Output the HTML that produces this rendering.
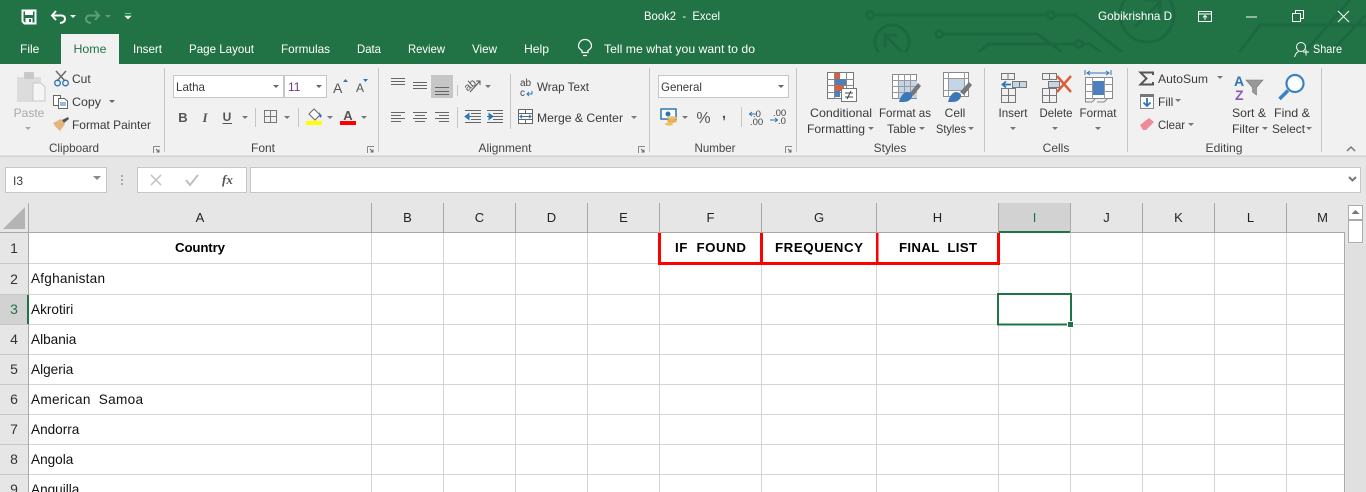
<!DOCTYPE html>
<html><head><meta charset="utf-8"><style>
html,body{margin:0;padding:0;width:1366px;height:492px;overflow:hidden;background:#fff}
svg{display:block}
text{font-family:"Liberation Sans",sans-serif;font-size:12px;fill:#3a3a3a;white-space:pre}
.t{fill:#fff}
.g{fill:#444;text-anchor:middle}
.c{text-anchor:middle;fill:#3a3a3a}
.h{font-size:13px;text-anchor:middle;fill:#222}
.r{font-size:14px;text-anchor:middle;fill:#333}
.d{font-size:13.6px;fill:#111}
.b{font-size:13.3px;font-weight:bold;text-anchor:middle;fill:#000}
.ln{stroke:#777;stroke-width:1;fill:none}
.gl{stroke:#d4d4d4;stroke-width:1}
.cir{stroke:#1c6840;stroke-width:3;fill:none}
</style></head><body>
<svg width="1366" height="492" viewBox="0 0 1366 492" xmlns="http://www.w3.org/2000/svg">
<defs><clipPath id="tb"><rect x="0" y="0" width="1366" height="52"/></clipPath></defs>
<!-- title bar -->
<rect width="1366" height="64" fill="#217346"/>
<g clip-path="url(#tb)" class="cir">
<circle cx="870" cy="15" r="3.5"/><path d="M874 15H1047M1055 15H1075L1122 52"/><circle cx="1051" cy="15" r="3.5"/>
<circle cx="892" cy="42" r="17"/><path d="M885 47V35H897M885 35L902 52"/>
<circle cx="939" cy="34" r="3.5"/><path d="M943 34H1037L1062 52M976 54L989 44H1075M1083 44H1090L1103 54"/><circle cx="1079" cy="44" r="3.5"/>
<circle cx="1147" cy="15" r="27"/><path d="M1135 27L1160 2M1145 0H1160V15"/>
<path d="M1238 54L1260 25H1366M1303 54L1350 0M1329 54L1366 15"/>
</g>
<!-- QAT -->
<path d="M22.500 10.500H35.500V23.500H24.500L22.500 21.500Z" fill="none" stroke="#fff" stroke-width="2"/><rect x="25" y="10" width="8" height="5" fill="#fff"/><rect x="25.500" y="18" width="7" height="5" fill="#fff"/><rect x="29" y="19" width="2" height="3" fill="#217346"/>
<path d="M52 15.500H61Q65 15.500 65 19T60 23M56 11L52 15.500L56 20" fill="none" stroke="#fff" stroke-width="2"/><path d="M70 15h6l-3 3z" fill="#fff"/>
<path d="M99 15.500H90Q86 15.500 86 19T91 23M95 11L99 15.500L95 20" fill="none" stroke="#5f9c7b" stroke-width="2"/><path d="M105 15h6l-3 3z" fill="#5f9c7b"/>
<path d="M125 13.500h6M125 16h6l-3 3z" fill="#fff" stroke="#fff" stroke-width=".6"/>
<text x="644" y="20" class="t" textLength="76" lengthAdjust="spacingAndGlyphs">Book2  -  Excel</text>
<text x="1098" y="20" class="t" textLength="74" lengthAdjust="spacingAndGlyphs">Gobikrishna D</text>
<rect x="1198.500" y="11.500" width="13" height="10" fill="none" stroke="#fff"/><path d="M1198 14H1212M1205 20V16M1203 17.500L1205 15.500L1207 17.500" stroke="#fff" fill="none"/>
<path d="M1246 17H1257" stroke="#fff"/>
<path d="M1292.500 13.500H1300.500V21.500H1292.500ZM1295.500 13V10.500H1303.500V18.500H1301" fill="none" stroke="#fff"/>
<path d="M1338 11L1349 22M1349 11L1338 22" stroke="#fff" fill="none"/>
<!-- tabs -->
<rect x="61" y="34" width="58" height="30" fill="#f1f1f1"/>
<text x="20" y="53" class="t">File</text>
<text x="90" y="53" text-anchor="middle" style="fill:#217346" textLength="33" lengthAdjust="spacingAndGlyphs">Home</text>
<text x="133" y="53" class="t" textLength="29" lengthAdjust="spacingAndGlyphs">Insert</text>
<text x="189" y="53" class="t" textLength="65" lengthAdjust="spacingAndGlyphs">Page Layout</text>
<text x="281" y="53" class="t" textLength="49" lengthAdjust="spacingAndGlyphs">Formulas</text>
<text x="357" y="53" class="t" textLength="24" lengthAdjust="spacingAndGlyphs">Data</text>
<text x="408" y="53" class="t" textLength="37" lengthAdjust="spacingAndGlyphs">Review</text>
<text x="472" y="53" class="t" textLength="25" lengthAdjust="spacingAndGlyphs">View</text>
<text x="524" y="53" class="t" textLength="25" lengthAdjust="spacingAndGlyphs">Help</text>
<path d="M582 52.500V50.500Q578.500 48.500 578.500 46A6 6 0 0 1 591.500 46Q591.500 48.500 588 50.500V52.500ZM583 55.500H587" fill="none" stroke="#fff" stroke-width="1.200"/>
<text x="604" y="53" class="t" textLength="151" lengthAdjust="spacingAndGlyphs">Tell me what you want to do</text>
<circle cx="1301" cy="47" r="4.500" fill="none" stroke="#fff"/><path d="M1294.500 57Q1296 52.500 1298.500 51.500M1303 52H1309M1306 49.500V55.500" fill="none" stroke="#fff"/>
<text x="1313" y="53" class="t" textLength="29" lengthAdjust="spacingAndGlyphs">Share</text>
<!-- ribbon -->
<rect y="64" width="1366" height="92" fill="#f1f1f1"/>
<rect y="156" width="1366" height="47" fill="#e6e6e6"/>
<rect y="155.500" width="1366" height="1.500" fill="#d2d2d2"/>
<g stroke="#c6c6c6"><path d="M164.500 68V152M378.500 68V152M649.500 68V152M796.500 68V152M984.500 68V152M1127.500 68V152M1321.500 68V152"/></g>
<!-- Clipboard -->
<path d="M17 77H41V88H33V102H17Z" fill="#dcdcdc"/><rect x="24" y="72" width="10" height="7" rx="1" fill="#c8c8c8"/>
<path d="M33 83H41L45 87V101H33Z" fill="#f5f5f5" stroke="#c8c8c8"/>
<text x="29" y="117" class="c" style="fill:#aaa">Paste</text><path d="M25 127h6l-3 3z" fill="#aaa"/>
<path d="M56 71L65 81M66 71L57 81" stroke="#6a6a6a" stroke-width="1.500" fill="none"/><circle cx="57.500" cy="83" r="2.800" fill="none" stroke="#2e75b6" stroke-width="1.300"/><circle cx="65.500" cy="83" r="2.800" fill="none" stroke="#2e75b6" stroke-width="1.300"/>
<text x="72" y="83">Cut</text>
<path d="M53.500 95.500H60.500V105.500H53.500Z" fill="#fff" stroke="#666"/><path d="M58.500 98.500H64.500L67.500 101V108.500H58.500Z" fill="#fff" stroke="#666"/><path d="M60 103H66M60 105H66" stroke="#2e75b6"/>
<text x="72" y="106" textLength="29" lengthAdjust="spacingAndGlyphs">Copy</text><path d="M109 100h6l-3 3z" fill="#666"/>
<path d="M53 123L61 119L65 124L60 131Q56 128 53 123Z" fill="#e3b778"/><path d="M62 120L68 117L69 119L64 123Z" fill="#555"/>
<text x="72" y="129" textLength="79" lengthAdjust="spacingAndGlyphs">Format Painter</text>
<text x="74" y="152" class="g" textLength="50" lengthAdjust="spacingAndGlyphs">Clipboard</text>
<g id="lau"><path d="M153.500 146.500H159.500V147M153.500 146.500V152.500H154" fill="none" stroke="#888"/><path d="M156 149L159 152M159 149.500V152H156.500" stroke="#666" fill="none"/></g>
<!-- Font -->
<rect x="173.500" y="75.500" width="110" height="22" fill="#fff" stroke="#c6c6c6"/><rect x="284.500" y="75.500" width="42" height="22" fill="#fff" stroke="#c6c6c6"/>
<text x="176" y="91" textLength="29" lengthAdjust="spacingAndGlyphs">Latha</text><path d="M273 85h6l-3 3z" fill="#666"/>
<text x="288" y="91" style="fill:#6a3a8a">11</text><path d="M316 85h6l-3 3z" fill="#666"/>
<text x="333" y="93" style="font-size:14px;fill:#555">A</text><path d="M343 82h5l-2.500-3z" fill="#2e75b6"/>
<text x="356" y="92" style="font-size:12px;fill:#555">A</text><path d="M363 79h5l-2.500 3z" fill="#2e75b6"/>
<text x="183" y="122" class="c" style="font-weight:bold;fill:#555;font-size:13px">B</text>
<text x="205" y="122" class="c" style="font-style:italic;font-family:'Liberation Serif',serif;font-weight:bold;fill:#555;font-size:13px">I</text>
<text x="227" y="121" class="c" style="font-weight:bold;fill:#555;font-size:12px">U</text><path d="M222.500 123.500H232" stroke="#555"/>
<path d="M242 116h6l-3 3z" fill="#777"/><path d="M255.500 108V127M298.500 108V127" stroke="#c6c6c6"/>
<path d="M264.500 110.500H276.500V122.500H264.500ZM270.500 110V123M264 116.500H277" fill="none" stroke="#777"/>
<path d="M284 116h6l-3 3z" fill="#777"/>
<path d="M309 114L314 109L320 115L315 120Z" fill="#fff" stroke="#666"/><path d="M319 112L322 116L320 118Z" fill="#2e75b6"/>
<rect x="306" y="121" width="16" height="4" fill="#ff0"/><path d="M327 116h6l-3 3z" fill="#777"/>
<text x="348" y="120" class="c" style="font-size:13px;font-weight:bold;fill:#555">A</text><rect x="340" y="121" width="16" height="4" fill="#f00"/><path d="M361 116h6l-3 3z" fill="#777"/>
<text x="263" y="152" class="g">Font</text>
<use href="#lau" x="214"/>
<!-- Alignment -->
<rect x="431" y="75" width="22" height="23" fill="#c6c6c6"/>
<path d="M391 78.500H405M391 81.500H405M391 84.500H405M413 82.500H427M413 85.500H427M413 88.500H427M435 87.500H449M435 91.500H449M435 94.500H449" stroke="#666" fill="none"/>
<path d="M391 112.500H405M391 115.500H401M391 118.500H405M391 121.500H401M413 112.500H427M415 115.500H425M413 118.500H427M415 121.500H425M435 112.500H449M439 115.500H449M435 118.500H449M439 121.500H449" stroke="#666" fill="none"/>
<path d="M457.500 85V96M457.500 107V128M510.500 74V129" stroke="#c6c6c6"/>
<text x="464" y="90" transform="rotate(-40 468 86)" style="font-size:11px;fill:#555">ab</text><path d="M470 92L480 81M476 81H480V85" stroke="#555" fill="none"/><path d="M485 85h6l-3 3z" fill="#777"/>
<path d="M471 113.500H481M471 116.500H481M471 119.500H481M465 122.500H481M465 110.500H481" stroke="#666"/><path d="M465 116.500L469 113.500V119.500ZM468 116.500H473" fill="#2e75b6" stroke="#2e75b6"/>
<path d="M493 113.500H503M493 116.500H503M493 119.500H503M487 122.500H503M487 110.500H503" stroke="#666"/><path d="M493 116.500L489 113.500V119.500ZM487 116.500H492" fill="#2e75b6" stroke="#2e75b6"/>
<text x="520" y="86" style="font-size:10px;fill:#444">ab</text><text x="520" y="96" style="font-size:10px;fill:#444">c</text><path d="M532 91V94H527M529 92L527 94L529 96" stroke="#2e75b6" fill="none"/>
<text x="537" y="91" textLength="52" lengthAdjust="spacingAndGlyphs">Wrap Text</text>
<rect x="518.500" y="109.500" width="14" height="14" fill="#fff" stroke="#666"/><path d="M518 113.500H533M518 119.500H533M525.500 109V113M525.500 120V124" stroke="#666"/><path d="M520 116.500H531M522 114.800L520 116.500L522 118.200M529 114.800L531 116.500L529 118.200" stroke="#2e75b6" fill="none"/>
<text x="537" y="122" textLength="86" lengthAdjust="spacingAndGlyphs">Merge &amp; Center</text><path d="M631 116h6l-3 3z" fill="#777"/>
<text x="505" y="152" class="g" textLength="53" lengthAdjust="spacingAndGlyphs">Alignment</text>
<use href="#lau" x="485"/>
<!-- Number -->
<rect x="658.500" y="75.500" width="130" height="22" fill="#fff" stroke="#c6c6c6"/>
<text x="661" y="91" textLength="41" lengthAdjust="spacingAndGlyphs">General</text><path d="M778 85h6l-3 3z" fill="#666"/>
<rect x="661" y="109" width="15" height="10" fill="#fff" stroke="#2e75b6" stroke-width="1.500"/><circle cx="668" cy="114" r="2.500" fill="#2e75b6"/><ellipse cx="672" cy="118" rx="5" ry="1.800" fill="#f0c060"/><ellipse cx="672" cy="121" rx="5" ry="1.800" fill="#e8b050"/><ellipse cx="669" cy="124" rx="4" ry="1.600" fill="#f0c060"/>
<path d="M682 116h6l-3 3z" fill="#777"/>
<text x="703.500" y="123" class="c" style="font-size:16px;fill:#555">%</text>
<text x="724" y="118" class="c" style="font-size:15px;font-weight:bold;fill:#555">,</text>
<path d="M741.500 107V127" stroke="#c6c6c6"/>
<text x="753" y="117" style="font-size:9.500px;fill:#444">.0</text><text x="750" y="125" style="font-size:9.500px;fill:#444">.00</text><path d="M750 114H756M752 112L749.500 114L752 116" stroke="#2e75b6" fill="none"/>
<text x="773" y="116" style="font-size:9.500px;fill:#444">.00</text><text x="778" y="124" style="font-size:9.500px;fill:#444">.0</text><path d="M770 120H777M775 118L777.500 120L775 122" stroke="#2e75b6" fill="none"/>
<text x="715" y="152" class="g" textLength="41" lengthAdjust="spacingAndGlyphs">Number</text>
<use href="#lau" x="632"/>
<!-- Styles -->
<rect x="827.500" y="72.500" width="26" height="26" fill="#fff" stroke="#777"/><path d="M827 79.500H854M827 85.500H854M827 92.500H854M834.500 72V99M846.500 72V99" stroke="#888"/>
<rect x="835" y="73" width="5" height="6" fill="#d9603a"/><rect x="835" y="79" width="11" height="6" fill="#4a80bd"/><rect x="835" y="85" width="9" height="6" fill="#d9603a"/><rect x="835" y="91" width="5" height="6" fill="#4a80bd"/>
<rect x="841.500" y="88.500" width="15" height="13" fill="#fff" stroke="#777"/><path d="M845 93H853M845 97H853M851 91L847 99" stroke="#444" fill="none"/>
<rect x="892.500" y="74.500" width="24" height="24" fill="#fff" stroke="#888"/><rect x="899" y="80" width="18" height="18" fill="#c4d5e8"/><path d="M892 80.500H917M892 86.500H917M892 92.500H917M898.500 74V99M904.500 74V99M910.500 74V99" stroke="#999"/>
<path d="M909 94L918 83L921 86L913 96Z" fill="#777"/><path d="M899 102Q901 94 906 92Q913 92 912 97Q910 102 903 102Z" fill="#3a78b8"/>
<rect x="943.500" y="72.500" width="25" height="24" fill="#fff" stroke="#888"/><rect x="948" y="78" width="16" height="13" fill="#c4d5e8"/><path d="M943 78.500H969M943 90.500H969M948.500 72V97M964.500 72V97" stroke="#999"/>
<path d="M960 92L969 82L972 85L964 95Z" fill="#777"/><path d="M948 102Q950 94 955 92Q962 92 961 97Q959 102 952 102Z" fill="#3a78b8"/>
<text x="841" y="117" class="c" textLength="62" lengthAdjust="spacingAndGlyphs">Conditional</text>
<text x="807" y="133" textLength="58" lengthAdjust="spacingAndGlyphs">Formatting</text><path d="M868 127h6l-3 3z" fill="#777"/>
<text x="905" y="117" class="c" textLength="52" lengthAdjust="spacingAndGlyphs">Format as</text>
<text x="887" y="133" textLength="29" lengthAdjust="spacingAndGlyphs">Table</text><path d="M919 127h6l-3 3z" fill="#777"/>
<text x="955" y="117" class="c">Cell</text>
<text x="936" y="133" textLength="30" lengthAdjust="spacingAndGlyphs">Styles</text><path d="M968 127h6l-3 3z" fill="#777"/>
<text x="890" y="152" class="g">Styles</text>
<!-- Cells -->
<path d="M1001.500 73.500H1014.500V79.500H1001.500ZM1008 73V80M1001.500 88.500H1015.500V102.500H1001.500ZM1001 95.500H1016M1008.500 88V103" fill="none" stroke="#777"/>
<rect x="1012.500" y="81.500" width="14" height="6" fill="#c4d5e8" stroke="#777"/><path d="M1019.500 81V88" stroke="#777"/><path d="M1011 84.500H1003M1006 81.500L1002.500 84.500L1006 87.500" stroke="#2e75b6" stroke-width="1.800" fill="none"/>
<path d="M1042.500 73.500H1056.500V79.500H1042.500ZM1049.500 73V80M1042.500 88.500H1056.500V102.500H1042.500ZM1042 95.500H1057M1049.500 88V103" fill="none" stroke="#777"/>
<rect x="1048.500" y="81.500" width="11" height="6" fill="#c4d5e8" stroke="#777"/><path d="M1057 76L1071 92M1071 76L1057 92" stroke="#d9603a" stroke-width="2.500"/>
<path d="M1085 70V75M1111 70V75M1087 73H1109M1090 71L1087 73L1090 75M1106 71L1109 73L1106 75" stroke="#2e75b6" fill="none"/>
<rect x="1085.500" y="77.500" width="27" height="21" fill="#fff" stroke="#888"/><path d="M1085 84.500H1113M1085 91.500H1113M1092.500 77V99M1104.500 77V99" stroke="#999"/><rect x="1093" y="81" width="11" height="14" fill="#4a80bd"/><path d="M1085.500 99V102H1092L1095 99M1097 102H1104L1107 99" stroke="#888" fill="none"/>
<text x="1013" y="117" class="c" textLength="29" lengthAdjust="spacingAndGlyphs">Insert</text><path d="M1010 127h6l-3 3z" fill="#777"/>
<text x="1056" y="117" class="c" textLength="33" lengthAdjust="spacingAndGlyphs">Delete</text><path d="M1052 127h6l-3 3z" fill="#777"/>
<text x="1098" y="117" class="c" textLength="37" lengthAdjust="spacingAndGlyphs">Format</text><path d="M1095 127h6l-3 3z" fill="#777"/>
<text x="1056" y="152" class="g">Cells</text>
<!-- Editing -->
<path d="M1153 75V72.500H1140.500L1146.500 78.500L1140.500 84.500H1153V82" fill="none" stroke="#555" stroke-width="2"/>
<text x="1158" y="83" textLength="50" lengthAdjust="spacingAndGlyphs">AutoSum</text><path d="M1217 76h6l-3 3z" fill="#777"/>
<rect x="1140.500" y="94.500" width="13" height="14" fill="#fff" stroke="#888"/><rect x="1140" y="94" width="14" height="3" fill="#777"/><path d="M1147 98V106M1143.500 102.500L1147 106L1150.500 102.500" stroke="#2e75b6" stroke-width="1.800" fill="none"/>
<text x="1158" y="106">Fill</text><path d="M1175 99h6l-3 3z" fill="#777"/>
<path d="M1140 125L1149 118L1154 122L1146 130H1143Z" fill="#ef8a9b"/>
<text x="1158" y="129" textLength="27" lengthAdjust="spacingAndGlyphs">Clear</text><path d="M1188 123h6l-3 3z" fill="#777"/>
<text x="1234" y="86" style="font-size:14px;font-weight:bold;fill:#2e75b6">A</text><text x="1235" y="100" style="font-size:14px;font-weight:bold;fill:#8a5cb0">Z</text>
<path d="M1246 80H1263L1256.500 87.500V95L1252.500 92V87.500Z" fill="#999" stroke="#777" stroke-width=".6"/>
<circle cx="1295" cy="83.500" r="8.500" fill="#fff" stroke="#3a82c4" stroke-width="2.200"/><path d="M1288 90.500L1279.500 99" stroke="#3a82c4" stroke-width="3.500"/>
<text x="1249" y="117" class="c" textLength="34" lengthAdjust="spacingAndGlyphs">Sort &amp;</text>
<text x="1232" y="133" textLength="27" lengthAdjust="spacingAndGlyphs">Filter</text><path d="M1262 127h6l-3 3z" fill="#777"/>
<text x="1292" y="117" class="c" textLength="36" lengthAdjust="spacingAndGlyphs">Find &amp;</text>
<text x="1272" y="133" textLength="33" lengthAdjust="spacingAndGlyphs">Select</text><path d="M1306 127h6l-3 3z" fill="#777"/>
<text x="1224" y="152" class="g" textLength="37" lengthAdjust="spacingAndGlyphs">Editing</text>
<path d="M1347 151L1351 147L1355 151" stroke="#777" stroke-width="1.500" fill="none"/>
<!-- Formula bar -->
<rect x="5.500" y="167.500" width="101" height="25" fill="#fff" stroke="#c6c6c6"/>
<text x="13" y="185">I3</text><path d="M93 176h8l-4 4z" fill="#888"/>
<path d="M122 175v2M122 179v2M122 183v2" stroke="#aaa" stroke-width="2"/>
<rect x="137.500" y="167.500" width="109" height="25" fill="#fff" stroke="#c6c6c6"/>
<path d="M151 175L161 185M161 175L151 185" stroke="#c0c0c0" stroke-width="1.500"/>
<path d="M186 180L190 185L198 175" stroke="#c0c0c0" stroke-width="2" fill="none"/>
<text x="222" y="184" style="font-family:'Liberation Serif',serif;font-style:italic;font-weight:bold;font-size:13px;fill:#555">fx</text>
<rect x="250.500" y="167.500" width="1110" height="25" fill="#fff" stroke="#c6c6c6"/>
<path d="M1349 177L1352.500 180.500L1356 177" stroke="#777" stroke-width="2" fill="none"/>
<!-- Sheet -->
<rect x="0" y="203" width="1366" height="30" fill="#e6e6e6"/>
<rect x="0" y="233" width="28" height="259" fill="#e6e6e6"/>
<rect x="29" y="233" width="1316" height="259" fill="#fff"/>
<rect x="1345" y="203" width="21" height="289" fill="#e6e6e6"/>
<path d="M25 207V229H3Z" fill="#b4b4b4"/>
<rect x="999" y="203" width="71" height="29" fill="#d2d2d2"/>
<rect x="0" y="295" width="27" height="29" fill="#d2d2d2"/>
<g class="gl">
<path d="M371.500 233V492M443.500 233V492M515.500 233V492M587.500 233V492M659.500 233V492M761.500 233V492M876.500 233V492M998.500 233V492M1070.500 233V492M1142.500 233V492M1214.500 233V492M1286.500 233V492"/>
<path d="M29 263.500H1344M29 294.500H1344M29 324.500H1344M29 354.500H1344M29 384.500H1344M29 414.500H1344M29 444.500H1344M29 474.500H1344"/>
</g>
<path d="M0 263.500H28M0 294.500H28M0 324.500H28M0 354.500H28M0 384.500H28M0 414.500H28M0 444.500H28M0 474.500H28" stroke="#c6c6c6"/>
<path d="M28.500 203V492M371.500 203V232M443.500 203V232M515.500 203V232M587.500 203V232M659.500 203V232M761.500 203V232M876.500 203V232M998.500 203V232M1070.500 203V232M1142.500 203V232M1214.500 203V232M1286.500 203V232M0 232.500H1345M1344.500 232V492" stroke="#a8a8a8" fill="none"/>
<rect x="999" y="231" width="71" height="2" fill="#217346"/>
<rect x="27" y="295" width="2" height="29" fill="#217346"/>
<!-- headers -->
<text x="200" y="222" class="h">A</text><text x="407.500" y="222" class="h">B</text><text x="479.500" y="222" class="h">C</text><text x="551.500" y="222" class="h">D</text><text x="623.500" y="222" class="h">E</text><text x="710.500" y="222" class="h">F</text><text x="819" y="222" class="h">G</text><text x="937.500" y="222" class="h">H</text><text x="1034.500" y="222" class="h" style="fill:#217346">I</text><text x="1106.500" y="222" class="h">J</text><text x="1178.500" y="222" class="h">K</text><text x="1250.500" y="222" class="h">L</text><text x="1322.500" y="222" class="h">M</text>
<text x="14" y="253" class="r">1</text><text x="14" y="284" class="r">2</text><text x="14" y="314" class="r" style="fill:#217346">3</text><text x="14" y="344" class="r">4</text><text x="14" y="374" class="r">5</text><text x="14" y="404" class="r">6</text><text x="14" y="434" class="r">7</text><text x="14" y="464" class="r">8</text><text x="14" y="494" class="r">9</text>
<!-- cells -->
<text x="200" y="252" class="b" textLength="50">Country</text>
<text x="710.500" y="252" class="b" textLength="71">IF  FOUND</text>
<text x="819" y="252" class="b" textLength="88">FREQUENCY</text>
<text x="938" y="252" class="b" textLength="78">FINAL  LIST</text>
<text x="31" y="283" class="d" textLength="74">Afghanistan</text><text x="31" y="314" class="d">Akrotiri</text><text x="31" y="344" class="d">Albania</text><text x="31" y="374" class="d">Algeria</text><text x="31" y="404" class="d" textLength="112">American  Samoa</text><text x="31" y="434" class="d">Andorra</text><text x="31" y="464" class="d">Angola</text><text x="31" y="494" class="d">Anguilla</text>
<!-- red borders -->
<path d="M658 233H661V262H760V233H763V262H876V233H878.500V262H997V233H1000V265H658Z" fill="#f00"/>
<!-- selection -->
<rect x="998" y="294" width="73" height="30.500" fill="none" stroke="#217346" stroke-width="2"/>
<rect x="1067.500" y="321.500" width="6" height="6" fill="#217346" stroke="#fff"/>
<!-- scrollbar -->
<rect x="1346" y="244" width="20" height="248" fill="#e0e0e0"/><rect x="1346" y="203" width="20" height="41" fill="#e6e6e6"/>
<rect x="1348.500" y="205.500" width="14" height="14" fill="#fff" stroke="#ababab"/><path d="M1351.500 214H1359.500L1355.500 210Z" fill="#777"/>
<rect x="1348.500" y="220.500" width="14" height="22" fill="#fff" stroke="#ababab"/>
</svg>
</body></html>
